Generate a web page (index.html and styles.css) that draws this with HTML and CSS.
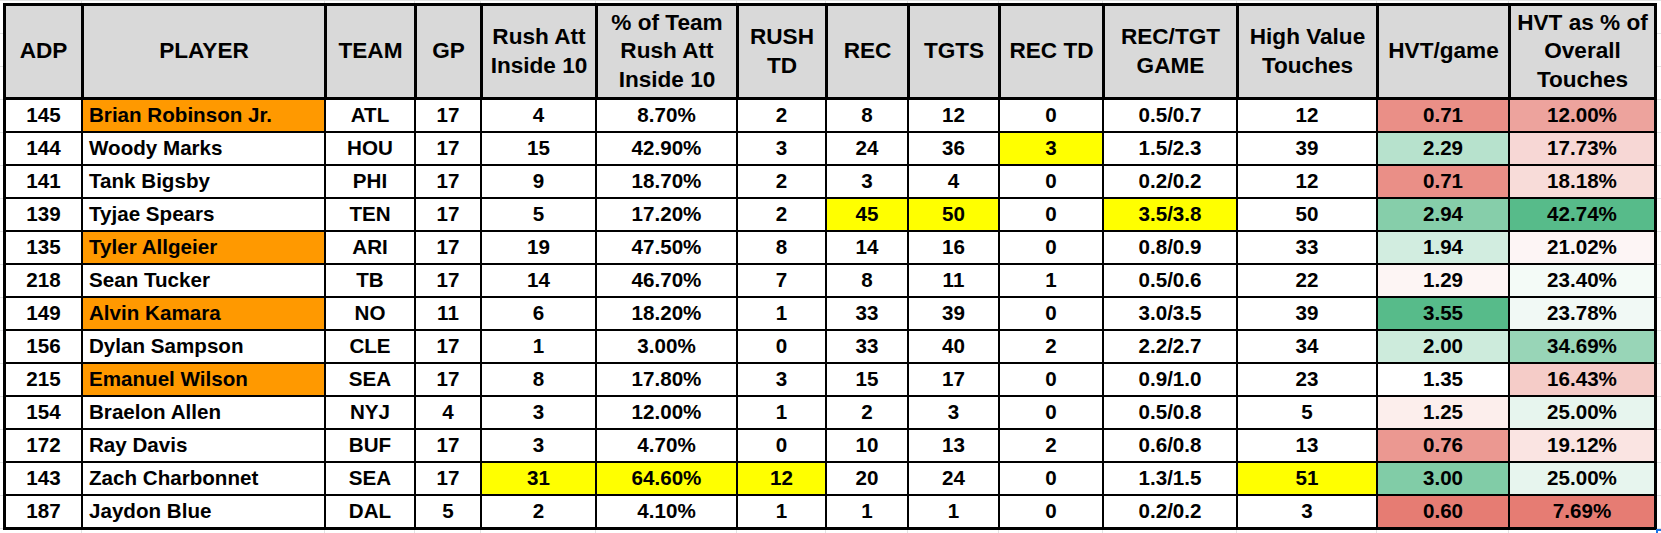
FILE: index.html
```html
<!DOCTYPE html>
<html>
<head>
<meta charset="utf-8">
<link rel="stylesheet" href="styles.css">
</head>
<body>
<div class="sheet">
  <div class="grid head">
    <div class="h">ADP</div>
    <div class="h">PLAYER</div>
    <div class="h">TEAM</div>
    <div class="h">GP</div>
    <div class="h">Rush Att<br>Inside 10</div>
    <div class="h">% of Team<br>Rush Att<br>Inside 10</div>
    <div class="h">RUSH<br>TD</div>
    <div class="h">REC</div>
    <div class="h">TGTS</div>
    <div class="h">REC TD</div>
    <div class="h">REC/TGT<br>GAME</div>
    <div class="h">High Value<br>Touches</div>
    <div class="h">HVT/game</div>
    <div class="h">HVT as % of<br>Overall<br>Touches</div>
  </div>
  <div class="grid rows">
    <div class="c">145</div><div class="c p or">Brian Robinson Jr.</div><div class="c">ATL</div><div class="c">17</div><div class="c">4</div><div class="c">8.70%</div><div class="c">2</div><div class="c">8</div><div class="c">12</div><div class="c">0</div><div class="c">0.5/0.7</div><div class="c">12</div><div class="c" style="background:rgb(234,143,135)">0.71</div><div class="c" style="background:rgb(237,163,157)">12.00%</div>

    <div class="c">144</div><div class="c p">Woody Marks</div><div class="c">HOU</div><div class="c">17</div><div class="c">15</div><div class="c">42.90%</div><div class="c">3</div><div class="c">24</div><div class="c">36</div><div class="c yl">3</div><div class="c">1.5/2.3</div><div class="c">39</div><div class="c" style="background:rgb(183,226,205)">2.29</div><div class="c" style="background:rgb(247,215,213)">17.73%</div>

    <div class="c">141</div><div class="c p">Tank Bigsby</div><div class="c">PHI</div><div class="c">17</div><div class="c">9</div><div class="c">18.70%</div><div class="c">2</div><div class="c">3</div><div class="c">4</div><div class="c">0</div><div class="c">0.2/0.2</div><div class="c">12</div><div class="c" style="background:rgb(234,143,135)">0.71</div><div class="c" style="background:rgb(248,220,217)">18.18%</div>

    <div class="c">139</div><div class="c p">Tyjae Spears</div><div class="c">TEN</div><div class="c">17</div><div class="c">5</div><div class="c">17.20%</div><div class="c">2</div><div class="c yl">45</div><div class="c yl">50</div><div class="c">0</div><div class="c yl">3.5/3.8</div><div class="c">50</div><div class="c" style="background:rgb(134,206,170)">2.94</div><div class="c" style="background:rgb(87,187,138)">42.74%</div>

    <div class="c">135</div><div class="c p or">Tyler Allgeier</div><div class="c">ARI</div><div class="c">17</div><div class="c">19</div><div class="c">47.50%</div><div class="c">8</div><div class="c">14</div><div class="c">16</div><div class="c">0</div><div class="c">0.8/0.9</div><div class="c">33</div><div class="c" style="background:rgb(210,237,224)">1.94</div><div class="c" style="background:rgb(253,245,245)">21.02%</div>

    <div class="c">218</div><div class="c p">Sean Tucker</div><div class="c">TB</div><div class="c">17</div><div class="c">14</div><div class="c">46.70%</div><div class="c">7</div><div class="c">8</div><div class="c">11</div><div class="c">1</div><div class="c">0.5/0.6</div><div class="c">22</div><div class="c" style="background:rgb(253,245,244)">1.29</div><div class="c" style="background:rgb(244,251,247)">23.40%</div>

    <div class="c">149</div><div class="c p or">Alvin Kamara</div><div class="c">NO</div><div class="c">11</div><div class="c">6</div><div class="c">18.20%</div><div class="c">1</div><div class="c">33</div><div class="c">39</div><div class="c">0</div><div class="c">3.0/3.5</div><div class="c">39</div><div class="c" style="background:rgb(87,187,138)">3.55</div><div class="c" style="background:rgb(241,249,245)">23.78%</div>

    <div class="c">156</div><div class="c p">Dylan Sampson</div><div class="c">CLE</div><div class="c">17</div><div class="c">1</div><div class="c">3.00%</div><div class="c">0</div><div class="c">33</div><div class="c">40</div><div class="c">2</div><div class="c">2.2/2.7</div><div class="c">34</div><div class="c" style="background:rgb(205,235,220)">2.00</div><div class="c" style="background:rgb(152,213,183)">34.69%</div>

    <div class="c">215</div><div class="c p or">Emanuel Wilson</div><div class="c">SEA</div><div class="c">17</div><div class="c">8</div><div class="c">17.80%</div><div class="c">3</div><div class="c">15</div><div class="c">17</div><div class="c">0</div><div class="c">0.9/1.0</div><div class="c">23</div><div class="c" style="background:rgb(255,255,255)">1.35</div><div class="c" style="background:rgb(245,204,200)">16.43%</div>

    <div class="c">154</div><div class="c p">Braelon Allen</div><div class="c">NYJ</div><div class="c">4</div><div class="c">3</div><div class="c">12.00%</div><div class="c">1</div><div class="c">2</div><div class="c">3</div><div class="c">0</div><div class="c">0.5/0.8</div><div class="c">5</div><div class="c" style="background:rgb(252,238,236)">1.25</div><div class="c" style="background:rgb(231,245,238)">25.00%</div>

    <div class="c">172</div><div class="c p">Ray Davis</div><div class="c">BUF</div><div class="c">17</div><div class="c">3</div><div class="c">4.70%</div><div class="c">0</div><div class="c">10</div><div class="c">13</div><div class="c">2</div><div class="c">0.6/0.8</div><div class="c">13</div><div class="c" style="background:rgb(235,152,145)">0.76</div><div class="c" style="background:rgb(250,228,226)">19.12%</div>

    <div class="c">143</div><div class="c p">Zach Charbonnet</div><div class="c">SEA</div><div class="c">17</div><div class="c yl">31</div><div class="c yl">64.60%</div><div class="c yl">12</div><div class="c">20</div><div class="c">24</div><div class="c">0</div><div class="c">1.3/1.5</div><div class="c yl">51</div><div class="c" style="background:rgb(129,204,167)">3.00</div><div class="c" style="background:rgb(231,245,238)">25.00%</div>

    <div class="c">187</div><div class="c p">Jaydon Blue</div><div class="c">DAL</div><div class="c">5</div><div class="c">2</div><div class="c">4.10%</div><div class="c">1</div><div class="c">1</div><div class="c">1</div><div class="c">0</div><div class="c">0.2/0.2</div><div class="c">3</div><div class="c" style="background:rgb(230,124,115)">0.60</div><div class="c" style="background:rgb(230,124,115)">7.69%</div>
  </div>
</div>
<div class="sel-corner"></div>
</body>
</html>
```

FILE: styles.css
```css
html, body {
  margin: 0;
  padding: 0;
}

body {
  position: relative;
  width: 1661px;
  height: 533px;
  overflow: hidden;
  background-color: #ffffff;
  background-image:
    linear-gradient(#e2e3e3, #e2e3e3),
    linear-gradient(#e2e3e3, #e2e3e3),
    linear-gradient(#e2e3e3, #e2e3e3),
    linear-gradient(#e2e3e3, #e2e3e3),
    linear-gradient(#e2e3e3, #e2e3e3),
    linear-gradient(#e2e3e3, #e2e3e3),
    linear-gradient(#e2e3e3, #e2e3e3),
    linear-gradient(#e2e3e3, #e2e3e3),
    linear-gradient(#e2e3e3, #e2e3e3),
    linear-gradient(#e2e3e3, #e2e3e3),
    linear-gradient(#e2e3e3, #e2e3e3),
    linear-gradient(#e2e3e3, #e2e3e3),
    linear-gradient(#e2e3e3, #e2e3e3),
    linear-gradient(to bottom, transparent 32px, #e2e3e3 32px);
  background-size:
    1px 100%, 1px 100%, 1px 100%, 1px 100%, 1px 100%, 1px 100%, 1px 100%,
    1px 100%, 1px 100%, 1px 100%, 1px 100%, 1px 100%, 1px 100%,
    100% 33px;
  background-position:
    81px 0, 324px 0, 414px 0, 480px 0, 595px 0, 736px 0, 825px 0,
    907px 0, 998px 0, 1102px 0, 1236px 0, 1376px 0, 1508px 0,
    0 1px;
  background-repeat:
    no-repeat, no-repeat, no-repeat, no-repeat, no-repeat, no-repeat, no-repeat,
    no-repeat, no-repeat, no-repeat, no-repeat, no-repeat, no-repeat,
    repeat-y;
  font-family: "Liberation Sans", Arial, sans-serif;
  font-weight: bold;
  color: #000;
}

.sheet {
  margin: 3px 0 0 3px;
  width: max-content;
  display: flex;
  flex-direction: column;
  gap: 3px;
  padding: 3px;
  background: #000;
}

.grid {
  display: grid;
  grid-template-columns: 75px 241px 88px 64px 113px 139px 87px 80px 89px 102px 132px 138px 130px 144px;
  column-gap: 2px;
  row-gap: 2px;
}

.head {
  grid-template-rows: 91px;
}

.rows {
  grid-auto-rows: 31px;
}

.h {
  background: #d9d9d9;
  display: flex;
  align-items: center;
  justify-content: center;
  text-align: center;
  font-size: 22.6px;
  line-height: 28.5px;
  box-sizing: border-box;
  border-left: 1px solid #000;
}

.h:first-child {
  border-left: none;
}

.c {
  background: #ffffff;
  display: flex;
  align-items: center;
  justify-content: center;
  font-size: 20.6px;
  line-height: 1;
  white-space: nowrap;
}

.p {
  justify-content: flex-start;
  padding-left: 6px;
}

.or {
  background: #ff9900;
}

.yl {
  background: #ffff00;
}

.sel-corner {
  position: absolute;
  left: 1656px;
  top: 529px;
  width: 5px;
  height: 4px;
  box-sizing: border-box;
  border-top: 2px solid #1a73e8;
  border-left: 2px solid #1a73e8;
}
```
